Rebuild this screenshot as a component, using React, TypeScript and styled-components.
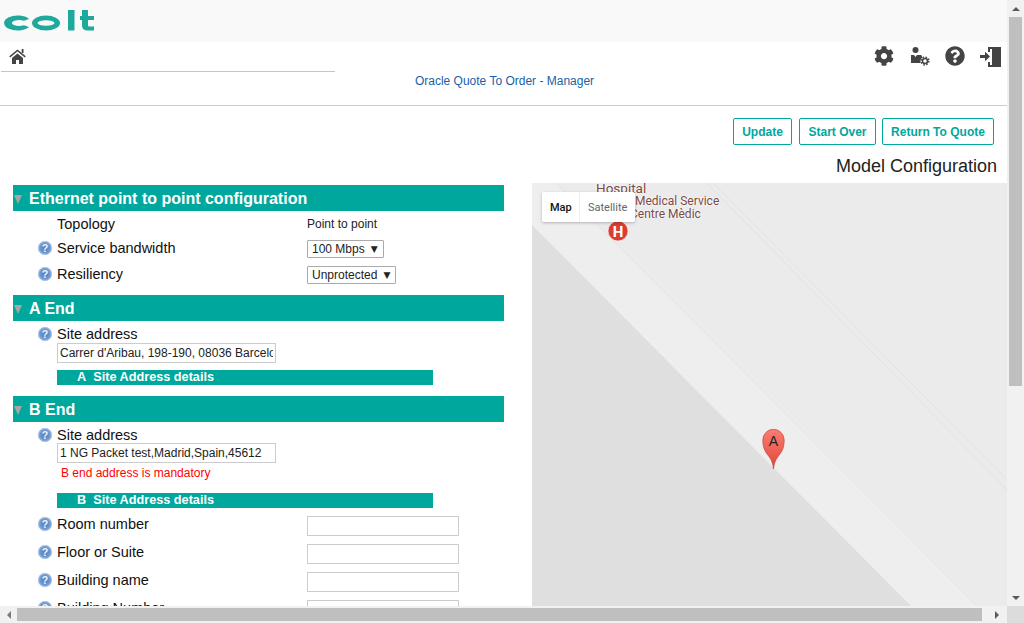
import React from 'react';
import styled, { createGlobalStyle } from 'styled-components';
import { FaCog, FaQuestionCircle } from 'react-icons/fa';

const GlobalStyle = createGlobalStyle`
  html, body { margin: 0; padding: 0; overflow: hidden; background: #fff; }
  body { font-family: "Liberation Sans", Arial, sans-serif; color: #111; }
  * { box-sizing: border-box; }
`;

const TEAL = '#00a79d';

const HelpIcon = () => (
  <HelpSvg viewBox="0 0 14 14">
    <defs>
      <radialGradient id="helpGlow" cx="50%" cy="50%" r="55%">
        <stop offset="0%" stopColor="#4f7dbd" />
        <stop offset="65%" stopColor="#6f97cf" />
        <stop offset="100%" stopColor="#b4cbe8" />
      </radialGradient>
    </defs>
    <circle cx="7" cy="7" r="6.800" fill="url(#helpGlow)" stroke="#8fb0da" strokeWidth="0.500" />
    <text x="7" y="10.800" textAnchor="middle" fontSize="10.500" fontWeight="700" fill="#eef4fc" fontFamily="Liberation Sans">?</text>
  </HelpSvg>
);

const ColtLogo = () => (
  <LogoSvg width="92" height="22" viewBox="0 0 92 22">
    <g fill="#1fa99d">
      <path d="M26 10A13.500 7.500 0 1 0 26 18L21 16.200A7.500 2.800 0 1 1 21 11.800Z" />
      <path fillRule="evenodd" d="M29 14a14 7.500 0 1 0 28 0a14 7.500 0 1 0 -28 0ZM34.500 14a8.500 2.800 0 1 1 17 0a8.500 2.800 0 1 1 -17 0Z" />
      <rect x="65" y="1" width="6.500" height="20.500" />
      <path d="M79 1h6v6h6v4h-6v5c0 1 .6 1.500 2 1.500h4v4h-6c-4 0-6-1.500-6-5.500v-5h-2V7h2z" />
    </g>
  </LogoSvg>
);

const HomeIcon = () => (
  <svg width="17" height="15" viewBox="0 0 17 15">
    <path d="M.7 7.800L8.500 1.500l7.800 6.300" fill="none" stroke="#444" strokeWidth="1.500" />
    <rect x="12.700" y="0" width="1.800" height="4" fill="#444" />
    <path d="M3 9L8.500 4.500 14 9v6H10v-4H7v4H3z" fill="#444" />
  </svg>
);

const UserGearIcon = () => (
  <svg width="20" height="20" viewBox="0 0 20 20">
    <circle cx="5.500" cy="4" r="3" fill="#444" />
    <path d="M1 9h3l1.500 2L7 9h3.500c.8 0 1.500.6 1.500 1.500v1.200a4.500 4.500 0 0 0-1.200 5.300H1z" fill="#444" />
    <circle cx="15" cy="15" r="3.900" fill="none" stroke="#444" strokeWidth="1.500" strokeDasharray="1.600 1.460" />
    <circle cx="15" cy="15" r="2.500" fill="none" stroke="#444" strokeWidth="1.500" />
  </svg>
);

const DoorIcon = () => (
  <svg width="21" height="21" viewBox="0 0 21 21">
    <path d="M8 1h13v20H8v-5h2v3h2V13l1-3-1-3V3h-2v3H8z" fill="#444" />
    <path d="M12 3l3-1v17l-3 0z" fill="#444" />
    <path d="M0 9h5V5.800L10 10.500l-5 4.700V12H0z" fill="#444" />
  </svg>
);

const MapDrawing = () => (
  <MapSvg viewBox="0 0 475 423">
    <rect width="475" height="423" fill="#ebebeb" />
    <polygon points="0,0 24,0 475,451 475,423 379,423 0,42" fill="#eeeeee" />
    <polygon points="0,42 379,423 0,423" fill="#dfdfdf" />
    <path d="M24 0L445 423" stroke="#e2e2e2" strokeWidth="1" fill="none" />
    <path d="M175 0L475 307M181 0L475 297" stroke="#e2e2e2" strokeWidth="1" fill="none" />
    <circle cx="86" cy="48" r="10" fill="#dc3d33" stroke="#f2f2f2" strokeWidth="0.600" />
    <text x="86" y="53.500" textAnchor="middle" fontSize="15" fontWeight="700" fill="#fff" fontFamily="Roboto">H</text>
    <defs>
      <linearGradient id="pinFill" x1="0" y1="0" x2="0" y2="1">
        <stop offset="0%" stopColor="#fb7d72" />
        <stop offset="100%" stopColor="#e0453a" />
      </linearGradient>
    </defs>
    <path d="M241.500 286c-.5-5-1.600-8.500-4.400-12.300C234.300 270 230.800 266.500 230.800 257a10.700 10.700 0 0 1 21.400 0c0 9.500-3.500 13-6.300 16.700-2.800 3.800-3.900 7.300-4.400 12.300z" fill="url(#pinFill)" stroke="#c4483e" strokeWidth="0.700" />
    <text x="241.500" y="263" textAnchor="middle" fontSize="14" fill="#222" fontFamily="Liberation Sans">A</text>
  </MapSvg>
);

const Row = ({ label, help = true, children, height, pad }: any) => (
  <FieldRow $height={height} $pad={pad}>
    <HelpCell>{help && <HelpIcon />}</HelpCell>
    <Label>{label}</Label>
    {children}
  </FieldRow>
);

const App = () => (
  <Shell>
    <GlobalStyle />
    <Middle>
      <Page>
        <LogoBar><ColtLogo /></LogoBar>
        <Nav>
          <NavTop>
            <HomeBar><HomeIcon /></HomeBar>
            <NavIcons>
              <GearSlot><FaCog size={20} /></GearSlot>
              <UserGearIcon />
              <FaQuestionCircle size={20} />
              <DoorIcon />
            </NavIcons>
          </NavTop>
          <AppTitle>Oracle Quote To Order - Manager</AppTitle>
        </Nav>
        <Actions>
          <ActionButton $width={59}>Update</ActionButton>
          <ActionButton $width={77} $gap={7}>Start Over</ActionButton>
          <ActionButton $width={112} $gap={6}>Return To Quote</ActionButton>
        </Actions>
        <PageTitle>Model Configuration</PageTitle>
        <Content>
          <FormColumn>
            <SectionHeader><Caret />Ethernet point to point configuration</SectionHeader>
            <Row label="Topology" help={false} height={24} pad={2}><PlainValue>Point to point</PlainValue></Row>
            <Row label="Service bandwidth" height={26}><SelectBox>100 Mbps<Arrow>▼</Arrow></SelectBox></Row>
            <Row label="Resiliency" height={26}><SelectBox>Unprotected<Arrow>▼</Arrow></SelectBox></Row>

            <SectionHeader $top={8}><Caret />A End</SectionHeader>
            <Row label="Site address" height={22} pad={4} />
            <AddressInput readOnly value="Carrer d'Aribau, 198-190, 08036 Barcelona" />
            <DetailsBar $top={7}>A&nbsp; Site Address details</DetailsBar>

            <SectionHeader $top={11}><Caret />B End</SectionHeader>
            <Row label="Site address" height={21} pad={4} />
            <AddressInput readOnly value="1 NG Packet test,Madrid,Spain,45612" />
            <ErrorText>B end address is mandatory</ErrorText>
            <DetailsBar $top={11}>B&nbsp; Site Address details</DetailsBar>

            <Row label="Room number" height={28}><TextBox /></Row>
            <Row label="Floor or Suite" height={28}><TextBox /></Row>
            <Row label="Building name" height={28}><TextBox /></Row>
            <Row label="Building Number" height={28}><TextBox /></Row>
          </FormColumn>
          <MapPanel>
            <MapDrawing />
            <MapLabel $left={64} $top={-2} $size={13.500}>Hospital</MapLabel>
            <MapLabel $left={103} $top={11} $size={12}>Medical Service</MapLabel>
            <MapLabel $left={98} $top={24} $size={12}>Centre Mèdic</MapLabel>
            <MapSwitch>
              <MapTab $active>Map</MapTab>
              <MapTab>Satellite</MapTab>
            </MapSwitch>
          </MapPanel>
        </Content>
      </Page>
      <VScroll>
        <ScrollArrow><UpGlyph /></ScrollArrow>
        <VThumb />
        <VSpacer />
        <ScrollArrow><DownGlyph /></ScrollArrow>
      </VScroll>
    </Middle>
    <HScroll>
      <ScrollArrow><LeftGlyph /></ScrollArrow>
      <HThumb />
      <ScrollArrow $wide><RightGlyph /></ScrollArrow>
      <Corner />
    </HScroll>
  </Shell>
);

const Shell = styled.div`
  width: 1024px;
  height: 623px;
  display: flex;
  flex-direction: column;
  overflow: hidden;
`;
const Middle = styled.div`
  display: flex;
  height: 606px;
`;
const Page = styled.div`
  width: 1007px;
  height: 606px;
  overflow: hidden;
  background: #fff;
`;
const LogoBar = styled.div`
  height: 42px;
  background: #f9f9f9;
  padding: 9px 0 0 3px;
`;
const LogoSvg = styled.svg`
  display: block;
  filter: blur(0.4px);
`;
const Nav = styled.div`
  height: 64px;
  border-bottom: 1px solid #c5ccd4;
`;
const NavTop = styled.div`
  display: flex;
  justify-content: space-between;
  height: 30px;
`;
const HomeBar = styled.div`
  width: 334px;
  margin-left: 1px;
  height: 30px;
  padding: 7px 0 0 8px;
  border-bottom: 1px solid #c0c6cc;
  svg { display: block; }
`;
const NavIcons = styled.div`
  display: flex;
  align-items: flex-start;
  gap: 15px;
  padding: 4px 6px 0 0;
  color: #444;
`;
const GearSlot = styled.span`
  display: block;
  height: 20px;
  margin-right: 1px;
`;
const AppTitle = styled.div`
  margin-top: 2px;
  padding-left: 2px;
  text-align: center;
  font-size: 12px;
  line-height: 14px;
  color: #1b5fa8;
`;
const Actions = styled.div`
  display: flex;
  justify-content: flex-end;
  padding: 12px 13px 0 0;
`;
const ActionButton = styled.button<{ $width: number; $gap?: number }>`
  width: ${(p) => p.$width}px;
  height: 27px;
  margin-left: ${(p) => p.$gap || 0}px;
  padding: 0;
  background: #fff;
  border: 1px solid ${TEAL};
  border-radius: 2px;
  color: ${TEAL};
  font: bold 12px "Liberation Sans", Arial, sans-serif;
`;
const PageTitle = styled.div`
  height: 38px;
  padding: 10px 10px 0 0;
  text-align: right;
  font-size: 18px;
  line-height: 22px;
  color: #222;
`;
const Content = styled.div`
  display: grid;
  grid-template-columns: 532px 475px;
  height: 423px;
`;
const FormColumn = styled.div`
  padding: 2px 0 0 13px;
  overflow: hidden;
`;
const SectionHeader = styled.div<{ $top?: number }>`
  display: flex;
  align-items: center;
  width: 491px;
  height: 26px;
  margin-top: ${(p) => p.$top || 0}px;
  padding-top: 2px;
  background: ${TEAL};
  color: #fff;
  font-weight: bold;
  font-size: 16px;
`;
const Caret = styled.span`
  width: 0;
  height: 0;
  margin: 0 7px 0 1px;
  border-left: 4.500px solid transparent;
  border-right: 4.500px solid transparent;
  border-top: 9px solid #a6a6a6;
`;
const FieldRow = styled.div<{ $height: number; $pad?: number }>`
  display: flex;
  align-items: center;
  height: ${(p) => p.$height}px;
  padding: ${(p) => p.$pad || 0}px 0 0 25px;
`;
const HelpCell = styled.div`
  width: 14px;
  height: 14px;
  margin-right: 5px;
`;
const HelpSvg = styled.svg`
  display: block;
  width: 14px;
  height: 14px;
`;
const Label = styled.div`
  width: 250px;
  font-size: 14.500px;
  color: #111;
`;
const PlainValue = styled.div`
  font-size: 12px;
  color: #222;
`;
const SelectBox = styled.div`
  display: flex;
  align-items: center;
  height: 18px;
  margin-top: 2px;
  padding: 0 5px 0 4px;
  border: 1px solid #aaa;
  border-radius: 1px;
  font-size: 12px;
  color: #222;
  background: #fff;
`;
const Arrow = styled.span`
  margin-left: 6px;
  font-size: 9px;
  font-family: "DejaVu Sans", sans-serif;
`;
const AddressInput = styled.input`
  display: block;
  width: 219px;
  height: 20px;
  margin-left: 44px;
  padding: 0 2px;
  border: 1px solid #ccc;
  outline: none;
  font: 12px "Liberation Sans", Arial, sans-serif;
  color: #222;
`;
const DetailsBar = styled.div<{ $top: number }>`
  width: 376px;
  height: 15px;
  margin: ${(p) => p.$top}px 0 2px 44px;
  padding-left: 20px;
  background: ${TEAL};
  color: #fff;
  font-weight: bold;
  font-size: 12.700px;
  line-height: 15px;
`;
const ErrorText = styled.div`
  height: 19px;
  margin-left: 48px;
  font-size: 12px;
  line-height: 20px;
  color: #f00;
`;
const TextBox = styled.input`
  width: 152px;
  height: 20px;
  margin-top: 4px;
  border: 1px solid #ccc;
  outline: none;
  background: #fff;
`;
const MapPanel = styled.div`
  position: relative;
  height: 423px;
  overflow: hidden;
`;
const MapSvg = styled.svg`
  display: block;
  width: 475px;
  height: 423px;
`;
const MapLabel = styled.div<{ $left: number; $top: number; $size: number }>`
  position: absolute;
  left: ${(p) => p.$left}px;
  top: ${(p) => p.$top}px;
  font-family: Roboto, sans-serif;
  font-size: ${(p) => p.$size}px;
  line-height: 14px;
  color: #7b4a45;
  white-space: nowrap;
  text-shadow: 0 0 2px #fff, 0 0 2px #fff;
`;
const MapSwitch = styled.div`
  position: absolute;
  left: 10px;
  top: 9px;
  display: flex;
  width: 93px;
  height: 30px;
  background: #fff;
  border-radius: 2px;
  box-shadow: 0 1px 3px rgba(0, 0, 0, 0.25);
`;
const MapTab = styled.div<{ $active?: boolean }>`
  display: flex;
  align-items: center;
  padding: 0 0 0 8px;
  width: ${(p) => (p.$active ? 37 : 56)}px;
  font-family: Roboto, sans-serif;
  font-size: 11px;
  font-weight: ${(p) => (p.$active ? 500 : 400)};
  color: ${(p) => (p.$active ? '#111' : '#666')};
  & + & { border-left: 1px solid #eee; }
`;
const VScroll = styled.div`
  display: flex;
  flex-direction: column;
  width: 17px;
  background: #f1f1f1;
`;
const VThumb = styled.div`
  width: 13px;
  height: 369px;
  margin-left: 2px;
  background: #bfbfbf;
`;
const VSpacer = styled.div`
  flex: 1;
`;
const ScrollArrow = styled.div<{ $wide?: boolean }>`
  display: flex;
  align-items: center;
  justify-content: center;
  flex: none;
  width: ${(p) => (p.$wide ? 25 : 17)}px;
  height: 17px;
  padding-left: ${(p) => (p.$wide ? 5 : 0)}px;
`;
const UpGlyph = styled.span`
  border-left: 4px solid transparent;
  border-right: 4px solid transparent;
  border-bottom: 4px solid #5a5a5a;
`;
const DownGlyph = styled.span`
  border-left: 4px solid transparent;
  border-right: 4px solid transparent;
  border-top: 4px solid #5a5a5a;
`;
const LeftGlyph = styled.span`
  border-top: 4px solid transparent;
  border-bottom: 4px solid transparent;
  border-right: 4px solid #7a7a7a;
`;
const RightGlyph = styled.span`
  border-top: 4px solid transparent;
  border-bottom: 4px solid transparent;
  border-left: 4px solid #5a5a5a;
`;
const HScroll = styled.div`
  display: flex;
  align-items: center;
  height: 17px;
  background: #f1f1f1;
`;
const HThumb = styled.div`
  width: 965px;
  height: 13px;
  background: #bfbfbf;
`;
const Corner = styled.div`
  width: 17px;
  height: 17px;
  background: #dcdcdc;
`;

export default App;
